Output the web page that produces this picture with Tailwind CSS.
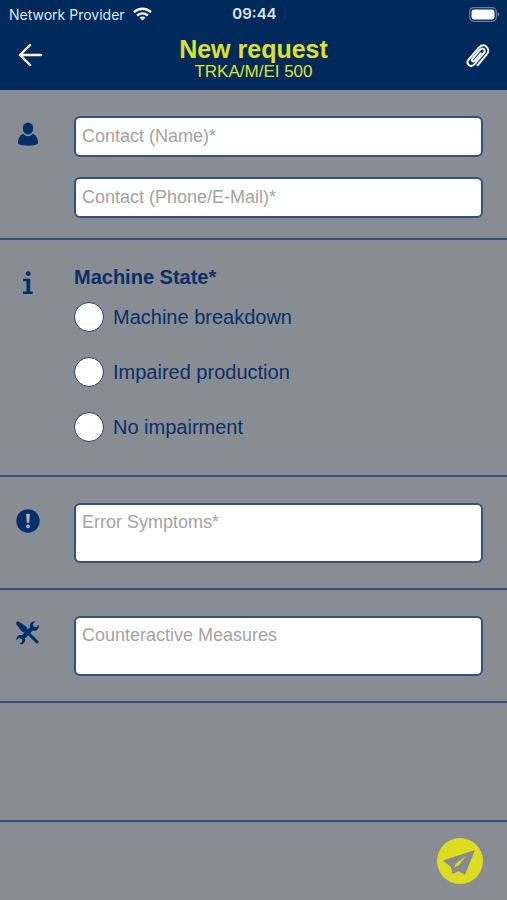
<!DOCTYPE html>
<html lang="en">

<head>
  <meta charset="UTF-8" />
  <meta name="viewport" content="width=device-width, initial-scale=1.0" />
  <title>New request</title>
  <script src="https://cdn.jsdelivr.net/npm/@tailwindcss/browser@4"></script>
</head>

<body class="min-h-screen flex flex-col bg-[#888d94] text-[#0b2f68] font-['Liberation_Sans',Arial,sans-serif]">

  <!-- Header -->
  <header class="h-[90px] bg-[#002a5c] text-white">
    <!-- Status bar -->
    <div class="h-7 grid grid-cols-3 items-center pl-[9px] pr-[7px] font-['Inter',sans-serif] text-[#dfe8f5]">
      <div class="flex items-center gap-2">
        <span class="text-[14px] whitespace-nowrap">Network Provider</span>
        <svg class="w-[19px] h-[14px] shrink-0" viewBox="0 0 19 14" fill="none" stroke="#fff" stroke-width="2.4">
          <path d="M1 5.2C5.8.6 13.2.6 18 5.2" />
          <path d="M4.2 8.5c3-2.8 7.6-2.8 10.6 0" />
          <path d="M9.5 13.6 6.6 10.7c1.6-1.5 4.2-1.5 5.8 0z" fill="#fff" stroke="none" />
        </svg>
      </div>
      <span class="text-center text-[15px] leading-5 font-semibold">09:44</span>
      <svg class="w-[31px] h-[15px] justify-self-end" viewBox="0 0 31 15">
        <rect x=".7" y=".7" width="26.6" height="13.6" rx="4" fill="none" stroke="#6681a0" stroke-width="1.2" />
        <rect x="2.5" y="2.5" width="23" height="10" rx="2.4" fill="#fff" />
        <path d="M28.6 5v5c1-.4 1.700-1.400 1.700-2.500S29.600 5.400 28.600 5z" fill="#6681a0" />
      </svg>
    </div>

    <!-- Title bar -->
    <div class="flex items-start justify-between pl-[18px] pr-[17px]">
      <button type="button" aria-label="Back" class="mt-[15px]">
        <svg class="w-6 h-6" viewBox="0 0 24 24" fill="none" stroke="#fff" stroke-width="2.4" stroke-linecap="round" stroke-linejoin="round">
          <path d="M23 12H2M12 2 2 12l10 10" />
        </svg>
      </button>
      <div class="mt-2 text-center text-[#dfe02a]">
        <h1 class="text-[25px] leading-[26px] font-bold">New request</h1>
        <p class="text-[17px] leading-5">TRKA/M/EI 500</p>
      </div>
      <button type="button" aria-label="Attach file" class="mt-[14px]">
        <svg class="w-[25px] h-[26px]" viewBox="0 0 25 26" fill="none" stroke="#fff" stroke-width="2" stroke-linecap="round" stroke-linejoin="round">
          <path d="M12.500 23.300 21.900 12.200C26 7.300 19.500-.1 14.300 5.200L3.600 17.600C.3 21.800 5.600 26.300 9.200 22.400L19 10.900c2.300-3-1.500-6-3.900-3.300L7.400 16.800c-1.400 1.800.6 3.500 2.200 1.800l6.200-7.300" />
        </svg>
      </button>
    </div>
  </header>

  <main class="flex-grow">
    <!-- Contact -->
    <section class="flex pt-[26px] pb-5 pr-6 border-b-2 border-[#35507a]">
      <div class="w-[74px] shrink-0 pl-[17px] pt-[6px]">
        <svg class="w-[22px] h-6" viewBox="0 0 22 24" fill="#002f6c">
          <ellipse cx="11" cy="6.600" rx="5.200" ry="6" />
          <path d="M6.200 11.800c2.600 3.300 7 3.300 9.600 0 3.200 1 5.200 5 5.200 9 0 1.900-4.600 2.900-10 2.900s-10-1-10-2.900c0-4 2-8 5.200-9z" />
        </svg>
      </div>
      <div class="flex-1 flex flex-col gap-5">
        <input type="text" aria-label="Contact (Name)" placeholder="Contact (Name)*" class="w-full h-[41px] px-[6px] text-[18px] bg-white border-2 border-[#35507a] rounded-md placeholder:text-[#a3a3a3]" />
        <input type="text" aria-label="Contact (Phone/E-Mail)" placeholder="Contact (Phone/E-Mail)*" class="w-full h-[41px] px-[6px] text-[18px] bg-white border-2 border-[#35507a] rounded-md placeholder:text-[#a3a3a3]" />
      </div>
    </section>

    <!-- Machine state -->
    <section class="flex pt-[26px] pb-[33px] pr-6 border-b-2 border-[#35507a]">
      <div class="w-[74px] shrink-0 pl-[17px] pt-[5px]">
        <svg class="w-[22px] h-6" viewBox="0 0 22 24" fill="#002f6c">
          <circle cx="11.200" cy="2.600" r="2.400" />
          <path d="M6 7.800h7.200v12.700h2.500V23H6v-2.500h3.400V10.300H6z" />
        </svg>
      </div>
      <fieldset class="flex-1">
        <legend class="text-[20px] leading-[22px] font-bold">Machine State*</legend>
        <div class="mt-[14px] flex flex-col gap-[25px]">
          <label class="flex items-center gap-[9px] text-[20px] leading-[30px]">
            <input type="radio" name="state" class="appearance-none w-[30px] h-[30px] rounded-full bg-white border border-[#1f3f70] checked:border-8" />
            Machine breakdown
          </label>
          <label class="flex items-center gap-[9px] text-[20px] leading-[30px]">
            <input type="radio" name="state" class="appearance-none w-[30px] h-[30px] rounded-full bg-white border border-[#1f3f70] checked:border-8" />
            Impaired production
          </label>
          <label class="flex items-center gap-[9px] text-[20px] leading-[30px]">
            <input type="radio" name="state" class="appearance-none w-[30px] h-[30px] rounded-full bg-white border border-[#1f3f70] checked:border-8" />
            No impairment
          </label>
        </div>
      </fieldset>
    </section>

    <!-- Error symptoms -->
    <section class="flex pt-[26px] pb-[25px] pr-6 border-b-2 border-[#35507a]">
      <div class="w-[74px] shrink-0 pl-4 pt-[6px]">
        <svg class="w-6 h-6" viewBox="0 0 24 24">
          <circle cx="12" cy="12" r="11.700" fill="#002f6c" />
          <path d="M10 4.800h4l-.7 9h-2.600z" fill="#a9b0ba" />
          <circle cx="12" cy="17.300" r="1.900" fill="#a9b0ba" />
        </svg>
      </div>
      <textarea aria-label="Error Symptoms" placeholder="Error Symptoms*" class="flex-1 h-[60px] px-[6px] py-[6px] text-[18px] leading-[22px] resize-none bg-white border-2 border-[#35507a] rounded-md placeholder:text-[#a3a3a3]"></textarea>
    </section>

    <!-- Counteractive measures -->
    <section class="flex pt-[26px] pb-[25px] pr-6 border-b-2 border-[#35507a]">
      <div class="w-[74px] shrink-0 pl-4 pt-[5px]">
        <svg class="w-6 h-6" viewBox="0 0 24 24" fill="#002f6c">
          <path d="M.3 1.300C.8.300 2.200.2 3.500.9L9.800 5.300c1.400 1.200 1.900 2.700 1.700 4.300L22.500 20.300c.7 1-1.100 2.900-2.100 2.200L9.500 11.500C7.800 11.600 6.300 11 5.200 9.700L.9 4.100C.2 3 0 2.100.3 1.300z" />
          <path d="M19.500.6c-4-1-6.500 2.200-5.400 5.500L6 14.300C2.800 13.100-.2 15.500.4 19.300l2.900-2.200 2.800.9.200 2.700-2.800 2.300c3.800 1 6.700-2.200 5.300-5.600l8.100-8c3.400 1.200 6.700-1.500 6-5.600l-2.700 2.500-2.700-.7-.7-2.500z" />
        </svg>
      </div>
      <textarea aria-label="Counteractive Measures" placeholder="Counteractive Measures" class="flex-1 h-[60px] px-[6px] py-[6px] text-[18px] leading-[22px] resize-none bg-white border-2 border-[#35507a] rounded-md placeholder:text-[#a3a3a3]"></textarea>
    </section>
  </main>

  <!-- Footer -->
  <footer class="h-20 flex items-center justify-end pr-6 border-t-2 border-[#35507a]">
    <button type="button" aria-label="Send request" class="w-[46px] h-[46px] rounded-full bg-[#dedc1e]">
      <svg class="w-[46px] h-[46px]" viewBox="0 0 46 46">
        <path d="M6 22.600 38 12 28 36.700 21.500 33.200 15.500 36 14 29z" fill="#858b91" />
        <path d="M17 29.500 19 25.600 29.500 17.500 21.500 27.500z" fill="#dedc1e" />
      </svg>
    </button>
  </footer>
</body>

</html>
